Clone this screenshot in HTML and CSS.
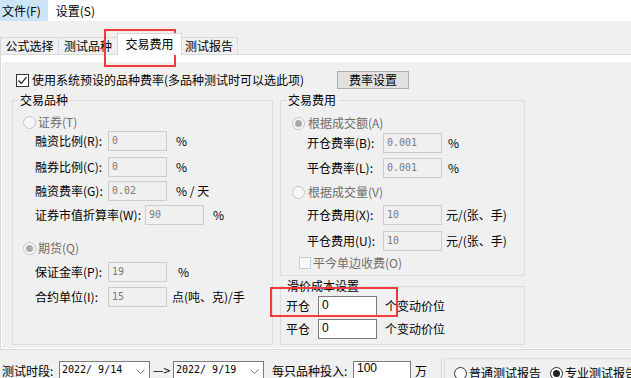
FILE: index.html
```html
<!DOCTYPE html>
<html lang="zh-CN">
<head>
  <meta charset="UTF-8">
  <title>交易费用</title>
  <link rel="stylesheet" href="styles.css">
</head>
<body>
  <!-- 菜单 -->
  <div class="menubar">
    <span class="menu-item active">文件(F)</span>
    <span class="menu-item">设置(S)</span>
  </div>

  <!-- 标签页 -->
  <div class="tabbar">
    <div class="tab t1">公式选择</div>
    <div class="tab t2">测试品种</div>
    <div class="tab active">交易费用</div>
    <div class="tab t4">测试报告</div>
  </div>

  <div class="tabpanel">
    <div class="form">
      <div class="top-row">
        <label class="check-label">
          <span class="check"><svg width="11" height="11" viewBox="0 0 11 11"><polyline points="1.5,5.5 4.3,8.3 9.5,2.2" fill="none" stroke="#222" stroke-width="1.3"/></svg></span>
          使用系统预设的品种费率(多品种测试时可以选此项)
        </label>
        <button class="btn">费率设置</button>
      </div>

      <div class="groups">
        <fieldset class="group group-left">
          <legend>交易品种</legend>
          <div class="opt mt6"><span class="radio"></span>证券(T)</div>
          <div class="row mt1"><span class="lbl">融资比例(R):</span><input class="box" value="0" disabled><span class="unit">%</span></div>
          <div class="row mt6"><span class="lbl">融券比例(C):</span><input class="box" value="0" disabled><span class="unit">%</span></div>
          <div class="row mt4"><span class="lbl">融资费率(G):</span><input class="box" value="0.02" disabled><span class="unit">% / 天</span></div>
          <div class="row mt4"><span class="lbl wide">证券市值折算率(W):</span><input class="box" value="90" disabled><span class="unit">%</span></div>
          <div class="opt mt15"><span class="radio checked"></span>期货(Q)</div>
          <div class="row mt6"><span class="lbl">保证金率(P):</span><input class="box" value="19" disabled><span class="unit wide-gap">%</span></div>
          <div class="row mt5"><span class="lbl">合约单位(I):</span><input class="box" value="15" disabled><span class="unit tight">点(吨、克)/手</span></div>
        </fieldset>

        <div class="right-col">
          <fieldset class="group group-fee">
            <legend>交易费用</legend>
            <div class="opt mt7"><span class="radio checked"></span>根据成交额(A)</div>
            <div class="row mt2"><span class="lbl">开仓费率(B):</span><input class="box" value="0.001" disabled><span class="unit">%</span></div>
            <div class="row mt5"><span class="lbl">平仓费率(L):</span><input class="box" value="0.001" disabled><span class="unit">%</span></div>
            <div class="opt mt6"><span class="radio"></span>根据成交量(V)</div>
            <div class="row mt5"><span class="lbl">开仓费用(X):</span><input class="box" value="10" disabled><span class="unit tight">元/(张、手)</span></div>
            <div class="row mt6"><span class="lbl">平仓费用(U):</span><input class="box" value="10" disabled><span class="unit tight">元/(张、手)</span></div>
            <div class="opt mt4 sub"><span class="check off"></span>平今单边收费(O)</div>
          </fieldset>

          <fieldset class="group group-slip">
            <legend>滑价成本设置</legend>
            <div class="row mt2"><span class="lbl">开仓</span><input class="box on" value="0"><span class="unit">个变动价位</span></div>
            <div class="row mt3"><span class="lbl">平仓</span><input class="box on" value="0"><span class="unit">个变动价位</span></div>
          </fieldset>
        </div>
      </div>
    </div>
  </div>

  <!-- 底部 -->
  <div class="bottombar">
    <span class="b-label period">测试时段:</span>
    <div class="date">
      <span>2022/ 9/14</span>
      <svg class="drop" width="9" height="6" viewBox="0 0 9 6"><polyline points="0.5,0.5 4.5,4.5 8.5,0.5" fill="none" stroke="#777" stroke-width="1"/></svg>
    </div>
    <span class="to">—&gt;</span>
    <div class="date">
      <span>2022/ 9/19</span>
      <svg class="drop" width="9" height="6" viewBox="0 0 9 6"><polyline points="0.5,0.5 4.5,4.5 8.5,0.5" fill="none" stroke="#777" stroke-width="1"/></svg>
    </div>
    <span class="b-label invest">每只品种投入:</span>
    <input class="box amount" value="100">
    <span class="b-label wan">万</span>
    <div class="report">
      <div class="report-inner">
        <div class="opt"><span class="radio live"></span>普通测试报告</div>
        <div class="opt"><span class="radio live checked"></span>专业测试报告</div>
      </div>
    </div>
  </div>

  <!-- 标注框 -->
  <div class="mark mark-tab"></div>
  <div class="mark mark-slip"></div>
</body>
</html>
```

FILE: styles.css
```css
* {
  box-sizing: border-box;
}
body {
  margin: 0;
  width: 631px;
  height: 378px;
  overflow: hidden;
  position: relative;
  background: #f0f0f0;
  font-family: "Noto Sans CJK SC", sans-serif;
  font-size: 12px;
  color: #000;
}

/* 菜单 */
.menubar {
  height: 21px;
  background: #fff;
  display: flex;
  line-height: 21px;
}
.menu-item {
  padding: 0 7px 0 2px;
}
.menu-item + .menu-item {
  padding-left: 8px;
}
.menu-item.active {
  background: #cce4f7;
}

/* 标签 */
.tabbar {
  height: 33px;
  display: flex;
  align-items: flex-end;
}
.tab {
  height: 17px;
  border: 1px solid #d9d9d9;
  border-bottom: none;
  background: #f0f0f0;
  text-align: center;
  line-height: 16px;
  margin-left: -1px;
}
.t1 { width: 59px; margin-left: 0; }
.t2 { width: 60px; }
.t4 { width: 58px; }
.tab.active {
  width: 65px;
  height: 22px;
  background: #fff;
  line-height: 20px;
  margin-bottom: -1px;
  margin-right: -1px;
  position: relative;
  z-index: 1;
}
.tabpanel {
  width: 640px;
  border: 1px solid #d9d9d9;
  background: #fff;
  padding: 7px 0 1px 1px;
}
.form {
  height: 286px;
  background: #f0f0f0;
  padding-top: 9px;
}

.top-row {
  display: flex;
  align-items: center;
  height: 18px;
  padding-left: 14px;
}
.check-label {
  width: 321px;
  display: flex;
  align-items: center;
  gap: 3px;
  line-height: 18px;
}
.btn {
  width: 72px;
  height: 18px;
  padding: 0;
  border: 1px solid #adadad;
  background: #e1e1e1;
  font: 12px "Noto Sans CJK SC", sans-serif;
  line-height: 16px;
}

/* 分组 */
.groups {
  display: flex;
  gap: 7px;
  padding-left: 10px;
  margin-top: 3px;
}
fieldset.group {
  margin: 0;
  padding: 0;
  min-width: 0;
  border: 1px solid #dcdcdc;
}
legend {
  padding: 0 2px;
  margin-left: 5px;
  line-height: 16px;
}
.group-left {
  width: 261px;
  height: 253px;
}
.right-col {
  width: 245px;
  display: flex;
  flex-direction: column;
  gap: 2px;
}
.group-fee {
  height: 184px;
}
.group-slip {
  height: 67px;
}
.group-slip legend {
  margin-left: 4px;
}

.row {
  display: flex;
  align-items: center;
  height: 20px;
  line-height: 20px;
}
.opt {
  display: flex;
  align-items: center;
  gap: 2px;
  height: 16px;
  line-height: 16px;
  color: #6d6d6d;
}
.lbl {
  flex: none;
}
.group-left .opt { padding-left: 10px; }
.group-left .row { padding-left: 22px; }
.group-left .lbl { width: 73px; }
.group-left .lbl.wide { width: 110px; }
.group-fee .opt { padding-left: 11px; gap: 3px; }
.group-fee .opt.sub { padding-left: 18px; gap: 2px; }
.group-fee .row { padding-left: 26px; }
.group-fee .lbl { width: 76px; }
.group-slip .row { padding-left: 5px; }
.group-slip .lbl { width: 32px; }

.mt1 { margin-top: 1px; }
.mt2 { margin-top: 2px; }
.mt3 { margin-top: 3px; }
.mt4 { margin-top: 4px; }
.mt5 { margin-top: 5px; }
.mt6 { margin-top: 6px; }
.mt7 { margin-top: 7px; }
.mt15 { margin-top: 15px; }

.box {
  width: 59px;
  height: 20px;
  margin: 0;
  padding: 0 0 2px 3px;
  border: 1px solid #cccccc;
  background: #f0f0f0;
  color: #7a7a7a;
  font: 10px "DejaVu Sans Mono", monospace;
  outline: none;
}
.box.on {
  background: #fff;
  border-color: #7a7a7a;
  color: #000;
  font: 12px "Liberation Sans", sans-serif;
}
.unit { margin-left: 9px; }
.unit.wide-gap { margin-left: 11px; }
.unit.tight { margin-left: 5px; }
.group-fee .unit { margin-left: 6px; }
.group-fee .unit.tight { margin-left: 4px; }
.group-slip .unit { margin-left: 8px; }

/* 单选 / 复选 */
.radio {
  width: 13px;
  height: 13px;
  flex: none;
  border: 1px solid #c4c4c4;
  border-radius: 50%;
  background: #f7f7f7;
  display: grid;
  place-items: center;
}
.radio.checked::after {
  content: "";
  width: 7px;
  height: 7px;
  border-radius: 50%;
  background: #a8a8a8;
}
.radio.live {
  border-color: #333;
  background: #fff;
}
.radio.live.checked::after {
  background: #222;
}
.check {
  width: 13px;
  height: 13px;
  flex: none;
  border: 1px solid #333;
  background: #fff;
  display: grid;
  place-items: center;
}
.check.off {
  width: 12px;
  height: 12px;
  border-color: #cccccc;
  background: #fafafa;
}

/* 底部 */
.bottombar {
  height: 28px;
  display: flex;
  align-items: flex-start;
  padding: 11px 0 0 2px;
}
.b-label {
  line-height: 18px;
  margin-top: 1px;
  flex: none;
}
.period { width: 57px; }
.date {
  width: 91px;
  height: 22px;
  flex: none;
  border: 1px solid #7a7a7a;
  background: #fff;
  display: flex;
  justify-content: space-between;
  padding: 1px 4px 0 2px;
  font: 10px "DejaVu Sans Mono", monospace;
  line-height: 14px;
}
.drop {
  margin-top: 6px;
}
.to {
  width: 23px;
  text-align: center;
  line-height: 18px;
  flex: none;
}
.invest {
  margin-left: 8px;
  width: 81px;
}
.box.amount {
  width: 58px;
  height: 22px;
  flex: none;
  background: #fff;
  border-color: #7a7a7a;
  color: #000;
  padding: 0 0 8px 3px;
  font: 12px "Liberation Sans", sans-serif;
}
.wan { margin-left: 4px; }
.report {
  margin: -3px 0 0 14px;
  height: 30px;
  border-left: 1px solid #dcdcdc;
  padding-left: 2px;
}
.report-inner {
  width: 200px;
  height: 30px;
  border-left: 1px solid #dcdcdc;
  border-top: 1px solid #dcdcdc;
  padding: 6px 0 0 9px;
  display: flex;
  gap: 9px;
}
.report .opt {
  color: #000;
  gap: 2px;
}

/* 标注 */
.mark {
  position: absolute;
  border: 2px solid #ef3b3b;
}
.mark-tab {
  left: 104px;
  top: 29px;
  width: 72px;
  height: 38px;
}
.mark-slip {
  left: 270px;
  top: 287px;
  width: 128px;
  height: 30px;
}
```
